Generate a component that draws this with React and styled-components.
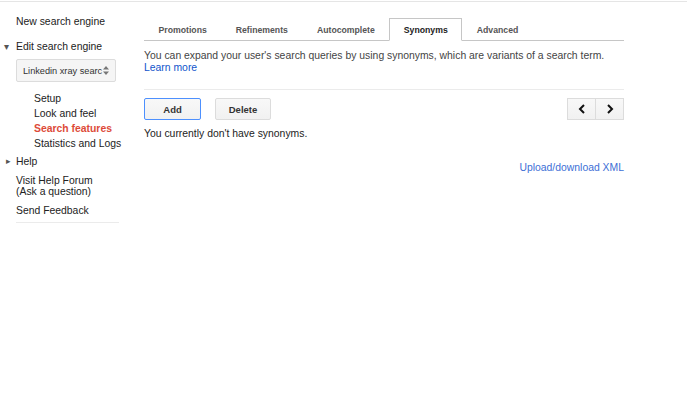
import React from 'react';
import styled, { createGlobalStyle } from 'styled-components';

const GlobalStyle = createGlobalStyle`
    body {
        margin: 0;
        background: #fff;
        font-family: 'Liberation Sans', Arial, sans-serif;
        color: #222;
    }
`;

const tabs = ['Promotions', 'Refinements', 'Autocomplete', 'Synonyms', 'Advanced'];

const App = () => {
    return(
        <Page>
            <GlobalStyle />
            <Sidebar>
                <NavItem gap={14}>New search engine</NavItem>
                <NavItem gap={7}>
                    <Caret>&#9662;</Caret>
                    Edit search engine
                </NavItem>
                <Select>
                    <SelectText>Linkedin xray searc</SelectText>
                    <Spinner>
                        <svg width="6" height="9" viewBox="0 0 6 9">
                            <path d="M3 0 L6 3.5 H0 Z M3 9 L0 5.5 H6 Z" fill="#777" />
                        </svg>
                    </Spinner>
                </Select>
                <SubList>
                    <SubItem>Setup</SubItem>
                    <SubItem>Look and feel</SubItem>
                    <SubItem active>Search features</SubItem>
                    <SubItem>Statistics and Logs</SubItem>
                </SubList>
                <NavItem gap={8}>
                    <Caret side>&#9656;</Caret>
                    Help
                </NavItem>
                <NavItem gap={8}>Visit Help Forum<br />(Ask a question)</NavItem>
                <NavItem gap={6}>Send Feedback</NavItem>
                <Rule />
            </Sidebar>
            <Main>
                <TabBar>
                    {tabs.map((t) => (
                        <Tab key={t} selected={t === 'Synonyms'}>{t}</Tab>
                    ))}
                </TabBar>
                <Description>
                    You can expand your user's search queries by using synonyms, which are variants of a search term.
                    <br />
                    <Link href="#">Learn more</Link>
                </Description>
                <Toolbar>
                    <Button primary>Add</Button>
                    <Button>Delete</Button>
                    <Pager>
                        <PagerButton>
                            <svg width="8" height="10" viewBox="0 0 8 10">
                                <path d="M6 1 L2 5 L6 9" stroke="#111" strokeWidth="2" fill="none" />
                            </svg>
                        </PagerButton>
                        <PagerButton>
                            <svg width="8" height="10" viewBox="0 0 8 10">
                                <path d="M2 1 L6 5 L2 9" stroke="#111" strokeWidth="2" fill="none" />
                            </svg>
                        </PagerButton>
                    </Pager>
                </Toolbar>
                <Empty>You currently don't have synonyms.</Empty>
                <Footer>
                    <XmlLink href="#">Upload/download XML</XmlLink>
                </Footer>
            </Main>
        </Page>
    );
}

export const Page = styled.div`
    display: flex;
    align-items: flex-start;
    border-top: 1px solid #e5e5e5;
    margin-top: 1px;
    min-height: 393px;
    font-size: 10.4px;
`;

export const Sidebar = styled.div`
    width: 103px;
    margin-left: 16px;
    padding-top: 14px;
    display: flex;
    flex-direction: column;
`;

export const NavItem = styled.div`
    position: relative;
    line-height: 11px;
    color: #222;
    margin-bottom: ${(p) => p.gap}px;
`;

export const Caret = styled.span`
    position: absolute;
    left: ${(p) => (p.side ? '-10px' : '-12px')};
    top: 0;
    font-size: ${(p) => (p.side ? '9px' : '10px')};
    color: #555;
`;

export const Select = styled.div`
    width: 100px;
    height: 23px;
    box-sizing: border-box;
    border: 1px solid #dcdcdc;
    border-radius: 2px;
    background: #f5f5f5;
    display: flex;
    align-items: center;
    justify-content: space-between;
    padding: 0 6px 0 6px;
    font-size: 9.2px;
    color: #333;
    margin-bottom: 11px;
`;

export const SelectText = styled.span`
    white-space: nowrap;
`;

export const Spinner = styled.span`
    display: flex;
`;

export const SubList = styled.div`
    padding-left: 18px;
    display: flex;
    flex-direction: column;
    gap: 4px;
    margin-bottom: 7px;
`;

export const SubItem = styled.div`
    line-height: 11px;
    color: ${(p) => (p.active ? '#dd4b39' : '#222')};
    font-weight: ${(p) => (p.active ? 'bold' : 'normal')};
    white-space: nowrap;
`;

export const Rule = styled.div`
    height: 1px;
    background: #ebebeb;
`;

export const Main = styled.div`
    margin-left: 25px;
    width: 480px;
    padding-top: 16px;
`;

export const TabBar = styled.div`
    display: flex;
    height: 22px;
    border-bottom: 1px solid #c6c6c6;
`;

export const Tab = styled.div`
    padding: 0 13.5px;
    box-sizing: border-box;
    display: flex;
    align-items: center;
    font-weight: bold;
    font-size: 8.7px;
    color: ${(p) => (p.selected ? '#222' : '#555')};
    background: #fff;
    border: 1px solid ${(p) => (p.selected ? '#c6c6c6' : 'transparent')};
    border-bottom: ${(p) => (p.selected ? '1px solid #fff' : 'none')};
    margin-bottom: ${(p) => (p.selected ? '-1px' : '0')};
    height: ${(p) => (p.selected ? '23px' : '22px')};
`;

export const Description = styled.div`
    margin-top: 9px;
    color: #444;
    line-height: 12px;
    padding-bottom: 15px;
    border-bottom: 1px solid #ebebeb;
`;

export const Link = styled.a`
    color: #1155cc;
    text-decoration: none;
`;

export const Toolbar = styled.div`
    display: flex;
    align-items: center;
    gap: 14px;
    margin-top: 8px;
`;

export const Button = styled.button`
    width: ${(p) => (p.primary ? '57px' : '56px')};
    height: 22px;
    font-family: 'Liberation Sans', Arial, sans-serif;
    font-size: 9.5px;
    font-weight: bold;
    color: #333;
    background: linear-gradient(#f8f8f8, #f1f1f1);
    border: 1px solid ${(p) => (p.primary ? '#4d90fe' : '#dcdcdc')};
    border-radius: 2px;
    padding: 0;
    cursor: pointer;
`;

export const Pager = styled.div`
    margin-left: auto;
    display: flex;
`;

export const PagerButton = styled.button`
    width: 29px;
    height: 22px;
    display: flex;
    align-items: center;
    justify-content: center;
    background: linear-gradient(#f8f8f8, #f1f1f1);
    border: 1px solid #dcdcdc;
    padding: 0;
    & + & {
        margin-left: -1px;
    }
`;

export const Empty = styled.div`
    margin-top: 8px;
    color: #222;
`;

export const Footer = styled.div`
    display: flex;
    justify-content: flex-end;
    margin-top: 23px;
`;

export const XmlLink = styled.a`
    color: #3d6fd6;
    text-decoration: none;
`;

export default App;
